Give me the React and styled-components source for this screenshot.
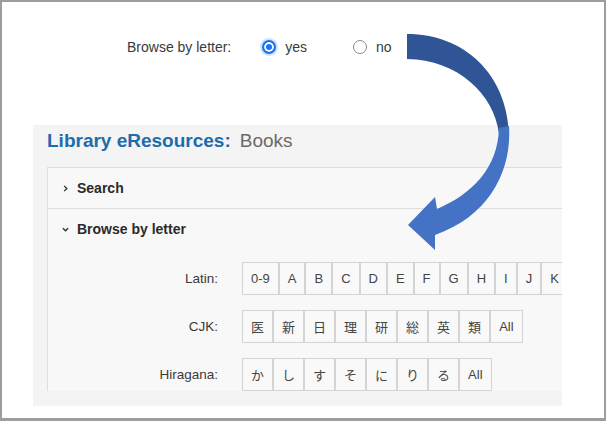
import styled, { createGlobalStyle } from 'styled-components'

const GlobalStyle = createGlobalStyle`
  html, body {
    margin: 0;
    padding: 0;
    background: #ffffff;
  }
  body {
    font-family: "Liberation Sans", Arial, "Noto Sans CJK JP", sans-serif;
  }
`

const Frame = styled.div`
  position: relative;
  box-sizing: border-box;
  width: 606px;
  height: 421px;
  border: 2px solid #9d9d9d;
  border-bottom-width: 3px;
  background: #ffffff;
  overflow: hidden;
`

const OptionRow = styled.div`
  display: flex;
  align-items: center;
  height: 20px;
  margin-top: 35px;
  padding-left: 125px;
  font-size: 14px;
  color: #3a3a3a;
`

const OptionLabel = styled.span`
  margin-right: 31px;
`

const RadioChoice = styled.label`
  display: flex;
  align-items: center;
  gap: 9px;
  margin-right: ${(p) => p.$space || 0}px;
`

const RadioDot = styled.span`
  box-sizing: border-box;
  width: 14px;
  height: 14px;
  border-radius: 50%;
  border: ${(p) => (p.$checked ? '2px solid #1a73f0' : '1px solid #8a8a8a')};
  box-shadow: ${(p) => (p.$checked ? '0 0 0 2px rgba(120, 170, 255, 0.35), inset 0 0 0 2px #fff' : 'none')};
  background: ${(p) => (p.$checked ? '#1a73f0' : '#fff')};
`

const Panel = styled.div`
  box-sizing: border-box;
  width: 529px;
  height: 281px;
  margin: 68px 0 0 31px;
  padding: 5px 0 0 14px;
  background: #f4f4f4;
  overflow: hidden;
`

const Title = styled.h1`
  margin: 0;
  display: flex;
  gap: 9px;
  align-items: baseline;
  height: 22px;
  line-height: 22px;
  font-size: 19px;
  white-space: nowrap;
`

const TitleMain = styled.span`
  color: #1c6cae;
  font-weight: bold;
`

const TitleSub = styled.span`
  color: #6a6a6a;
  font-weight: normal;
`

const Accordion = styled.div`
  width: 560px;
  margin-top: 15px;
  border-left: 1px solid #dedede;
  border-top: 1px solid #dedede;
  background: #f8f8f8;
`

const Header = styled.div`
  display: flex;
  align-items: center;
  gap: 8px;
  height: 40px;
  padding-left: 14px;
  font-size: 14px;
  font-weight: bold;
  color: #2a2a2a;
  border-bottom: ${(p) => (p.$divider ? '1px solid #dedede' : 'none')};
`

const Chevron = styled.svg`
  width: 7px;
  height: 7px;
  flex: none;
`

const Body = styled.div`
  display: flex;
  flex-direction: column;
  gap: 15px;
  padding-top: 13px;
`

const LetterRow = styled.div`
  display: flex;
  align-items: center;
`

const RowLabel = styled.div`
  flex: none;
  width: 170px;
  margin-right: 24px;
  text-align: right;
  font-size: 13.5px;
  color: #3a3a3a;
`

const Buttons = styled.div`
  display: flex;
  flex-wrap: nowrap;
  flex: none;
`

const LetterButton = styled.span`
  display: flex;
  align-items: center;
  justify-content: center;
  flex: none;
  height: 31px;
  padding: 0 8px;
  border: 1px solid #d4d4d4;
  background: #f9f9f9;
  font-size: 13px;
  color: #444444;
`

const Overlay = styled.svg`
  position: absolute;
  left: 0;
  top: 0;
  width: 606px;
  height: 421px;
  pointer-events: none;
`

const rows = [
  { label: 'Latin:', keys: ['0-9', 'A', 'B', 'C', 'D', 'E', 'F', 'G', 'H', 'I', 'J', 'K'] },
  { label: 'CJK:', keys: ['医', '新', '日', '理', '研', '総', '英', '類', 'All'] },
  { label: 'Hiragana:', keys: ['か', 'し', 'す', 'そ', 'に', 'り', 'る', 'All'] },
]

const ChevronIcon = ({ open }) => (
  <Chevron viewBox="0 0 8 8">
    {open ? (
      <path d="M1 2.5 L4 5.5 L7 2.5" fill="none" stroke="#333" strokeWidth="1.6" />
    ) : (
      <path d="M2.5 1 L5.5 4 L2.5 7" fill="none" stroke="#333" strokeWidth="1.6" />
    )}
  </Chevron>
)

const CurvedArrow = () => (
  <Overlay viewBox="0 0 606 421">
    <path
      d="M405 32 C462 32 505 72 507 132 L497 132 C492 92 456 58 405 57 Z"
      fill="#2f5597"
    />
    <path
      d="M507 124 C510 168 488 214 433 233 L433 248 L406 223 L433 195 L435 207 C470 192 496 166 497 126 Z"
      fill="#4472c4"
    />
  </Overlay>
)

const App = () => {
  return (
    <>
      <GlobalStyle />
      <Frame>
        <OptionRow>
          <OptionLabel>Browse by letter:</OptionLabel>
          <RadioChoice $space={46}>
            <RadioDot $checked />
            yes
          </RadioChoice>
          <RadioChoice>
            <RadioDot />
            no
          </RadioChoice>
        </OptionRow>

        <Panel>
          <Title>
            <TitleMain>Library eResources:</TitleMain>
            <TitleSub>Books</TitleSub>
          </Title>
          <Accordion>
            <Header $divider>
              <ChevronIcon />
              Search
            </Header>
            <Header>
              <ChevronIcon open />
              Browse by letter
            </Header>
            <Body>
              {rows.map((row) => (
                <LetterRow key={row.label}>
                  <RowLabel>{row.label}</RowLabel>
                  <Buttons>
                    {row.keys.map((k) => (
                      <LetterButton key={k}>{k}</LetterButton>
                    ))}
                  </Buttons>
                </LetterRow>
              ))}
            </Body>
          </Accordion>
        </Panel>
        <CurvedArrow />
      </Frame>
    </>
  )
}

export default App
